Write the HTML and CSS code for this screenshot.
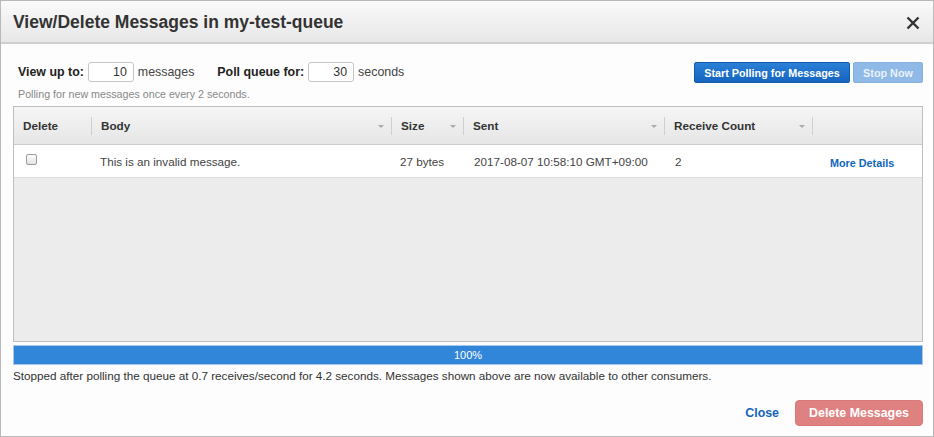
FILE: index.html
```html
<!DOCTYPE html>
<html>
<head>
<meta charset="utf-8">
<link rel="stylesheet" href="styles.css">
</head>
<body>
<div class="dialog">
  <div class="dlg-header">
    <h1 class="dlg-title">View/Delete Messages in my-test-queue</h1>
    <span class="dlg-close">
      <svg width="14" height="14" viewBox="0 0 14 14"><path d="M1.5 1.5 L12.5 12.5 M12.5 1.5 L1.5 12.5" stroke="#333" stroke-width="2.4" stroke-linecap="butt"/></svg>
    </span>
  </div>
  <div class="dlg-body">
    <div class="controls">
      <div class="controls-left">
        <div class="fields">
          <label class="lbl">View up to:</label>
          <input class="num" type="text" value="10">
          <span class="unit">messages</span>
          <label class="lbl lbl2">Poll queue for:</label>
          <input class="num" type="text" value="30">
          <span class="unit">seconds</span>
        </div>
        <div class="hint">Polling for new messages once every 2 seconds.</div>
      </div>
      <div class="controls-right">
        <button class="btn btn-primary">Start Polling for Messages</button>
        <button class="btn btn-disabled">Stop Now</button>
      </div>
    </div>

    <div class="grid">
      <div class="grid-head">
        <div class="hcell c-del"><span>Delete</span><i class="sep"></i></div>
        <div class="hcell c-body"><span>Body</span><i class="arr"></i><i class="sep"></i></div>
        <div class="hcell c-size"><span>Size</span><i class="arr"></i><i class="sep"></i></div>
        <div class="hcell c-sent"><span>Sent</span><i class="arr"></i><i class="sep"></i></div>
        <div class="hcell c-rc"><span>Receive Count</span><i class="arr"></i><i class="sep"></i></div>
        <div class="hcell c-act"></div>
      </div>
      <div class="grid-row">
        <div class="cell c-del"><input type="checkbox" class="chk"></div>
        <div class="cell c-body">This is an invalid message.</div>
        <div class="cell c-size">27 bytes</div>
        <div class="cell c-sent">2017-08-07 10:58:10 GMT+09:00</div>
        <div class="cell c-rc">2</div>
        <div class="cell c-act"><a class="more">More Details</a></div>
      </div>
      <div class="grid-empty"></div>
    </div>

    <div class="progress"><div class="progress-fill" style="width:100%">100%</div></div>
    <div class="status">Stopped after polling the queue at 0.7 receives/second for 4.2 seconds. Messages shown above are now available to other consumers.</div>

    <div class="footer">
      <a class="close-link">Close</a>
      <button class="btn btn-danger">Delete Messages</button>
    </div>
  </div>
</div>
</body>
</html>
```

FILE: styles.css
```css
* { box-sizing: border-box; }
html, body { margin: 0; padding: 0; }
body {
  font-family: "Liberation Sans", Arial, sans-serif;
  color: #333;
  background: #fff;
  width: 934px;
  height: 437px;
  overflow: hidden;
}
.dialog {
  width: 934px;
  height: 437px;
  border: 1px solid #b9b9b9;
  background: #fdfdfd;
  display: flex;
  flex-direction: column;
}
.dlg-header {
  height: 43px;
  flex: none;
  background: linear-gradient(#fafafa, #e7e7e7);
  border-bottom: 2px solid #cfcfcf;
  display: flex;
  align-items: center;
  justify-content: space-between;
  padding: 0 12px 0 12px;
}
.dlg-title {
  margin: 0;
  font-size: 17.5px;
  font-weight: bold;
  color: #333;
  padding-top: 1px;
}
.dlg-close { display: flex; margin-top: 2px; margin-right: 1px; }
.dlg-body {
  flex: 1;
  padding: 18px 10px 0 12px;
  display: flex;
  flex-direction: column;
}
.controls {
  display: flex;
  justify-content: space-between;
  align-items: flex-start;
}
.controls-left { padding-left: 5px; }
.fields {
  display: flex;
  align-items: center;
  height: 20px;
  font-size: 12.4px;
}
.lbl { font-weight: bold; color: #222; }
.lbl2 { margin-left: 23px; }
.num {
  width: 46px;
  height: 20px;
  margin: 0 4px 0 4px;
  border: 1px solid #c6c6c6;
  border-radius: 3px;
  text-align: right;
  font-family: inherit;
  font-size: 12.4px;
  color: #333;
  padding: 0 6px;
  background: #fff;
}
.unit { color: #444; }
.hint {
  margin-top: 6px;
  font-size: 10.7px;
  color: #888;
}
.controls-right {
  display: flex;
  gap: 3px;
}
.btn {
  font-family: inherit;
  font-weight: bold;
  font-size: 10.8px;
  border-radius: 2px;
  height: 21px;
  padding: 0 8px;
  white-space: nowrap;
  cursor: pointer;
}
.btn-primary {
  background: linear-gradient(#2a7fd6, #1565c0);
  border: 1px solid #145aa8;
  color: #fff;
  width: 156px;
}
.btn-disabled {
  background: #8fb9e7;
  border: 1px solid #86b0de;
  color: #eaf2fb;
  width: 70px;
}
.grid {
  margin-top: 6px;
  height: 236px;
  border: 1px solid #bfbfbf;
  background: #ececec;
  display: flex;
  flex-direction: column;
}
.grid-head, .grid-row {
  display: grid;
  grid-template-columns: 78px 300px 72px 201px 148px 1fr;
}
.grid-head {
  height: 38px;
  background: linear-gradient(#f5f5f5, #e6e6e6);
  border-bottom: 1px solid #cdcdcd;
  font-size: 11.7px;
  font-weight: bold;
  color: #333;
}
.hcell {
  position: relative;
  display: flex;
  align-items: center;
  padding-left: 9px;
}
.hcell .sep {
  position: absolute;
  right: 0;
  top: 10px;
  height: 18px;
  width: 1px;
  background: #cfcfcf;
}
.hcell .arr {
  position: absolute;
  right: 8px;
  top: 18px;
  width: 0;
  height: 0;
  border-left: 3px solid transparent;
  border-right: 3px solid transparent;
  border-top: 3px solid #aaa;
}
.grid-row {
  height: 33px;
  background: #fff;
  border-bottom: 1px solid #dcdcdc;
  font-size: 11.7px;
  color: #444;
}
.cell {
  display: flex;
  align-items: center;
  padding-left: 9px;
}
.c-body.cell, .c-size.cell { padding-left: 8px; }
.c-sent.cell { padding-left: 10px; }
.c-rc.cell { padding-left: 10px; }
.chk {
  appearance: none;
  -webkit-appearance: none;
  width: 11px;
  height: 11px;
  margin: -4px 0 0 3px;
  border: 1px solid #9c9c9c;
  border-radius: 2px;
  background: linear-gradient(#fdfdfd, #e3e3e3);
}
.c-act.cell { justify-content: flex-start; padding-left: 17px; }
.more {
  color: #1166bb;
  font-weight: bold;
  font-size: 10.8px;
  padding-top: 3px;
}
.grid-empty { flex: 1; }
.progress {
  margin-top: 3px;
  height: 20px;
  border: 1px solid #a9c8ea;
  background: #fff;
}
.progress-fill {
  height: 100%;
  background: #3186d9;
  color: #fff;
  font-size: 11px;
  display: flex;
  align-items: center;
  justify-content: center;
}
.status {
  margin-top: 4px;
  font-size: 11.7px;
  color: #333;
}
.footer {
  margin-top: auto;
  margin-bottom: 10px;
  display: flex;
  justify-content: flex-end;
  align-items: center;
  gap: 16px;
}
.close-link {
  color: #1166bb;
  font-weight: bold;
  font-size: 12.4px;
}
.btn-danger {
  background: #e08181;
  border: 1px solid #d87a7a;
  color: #fff;
  font-size: 12.4px;
  height: 26px;
  width: 128px;
  border-radius: 4px;
}
```
